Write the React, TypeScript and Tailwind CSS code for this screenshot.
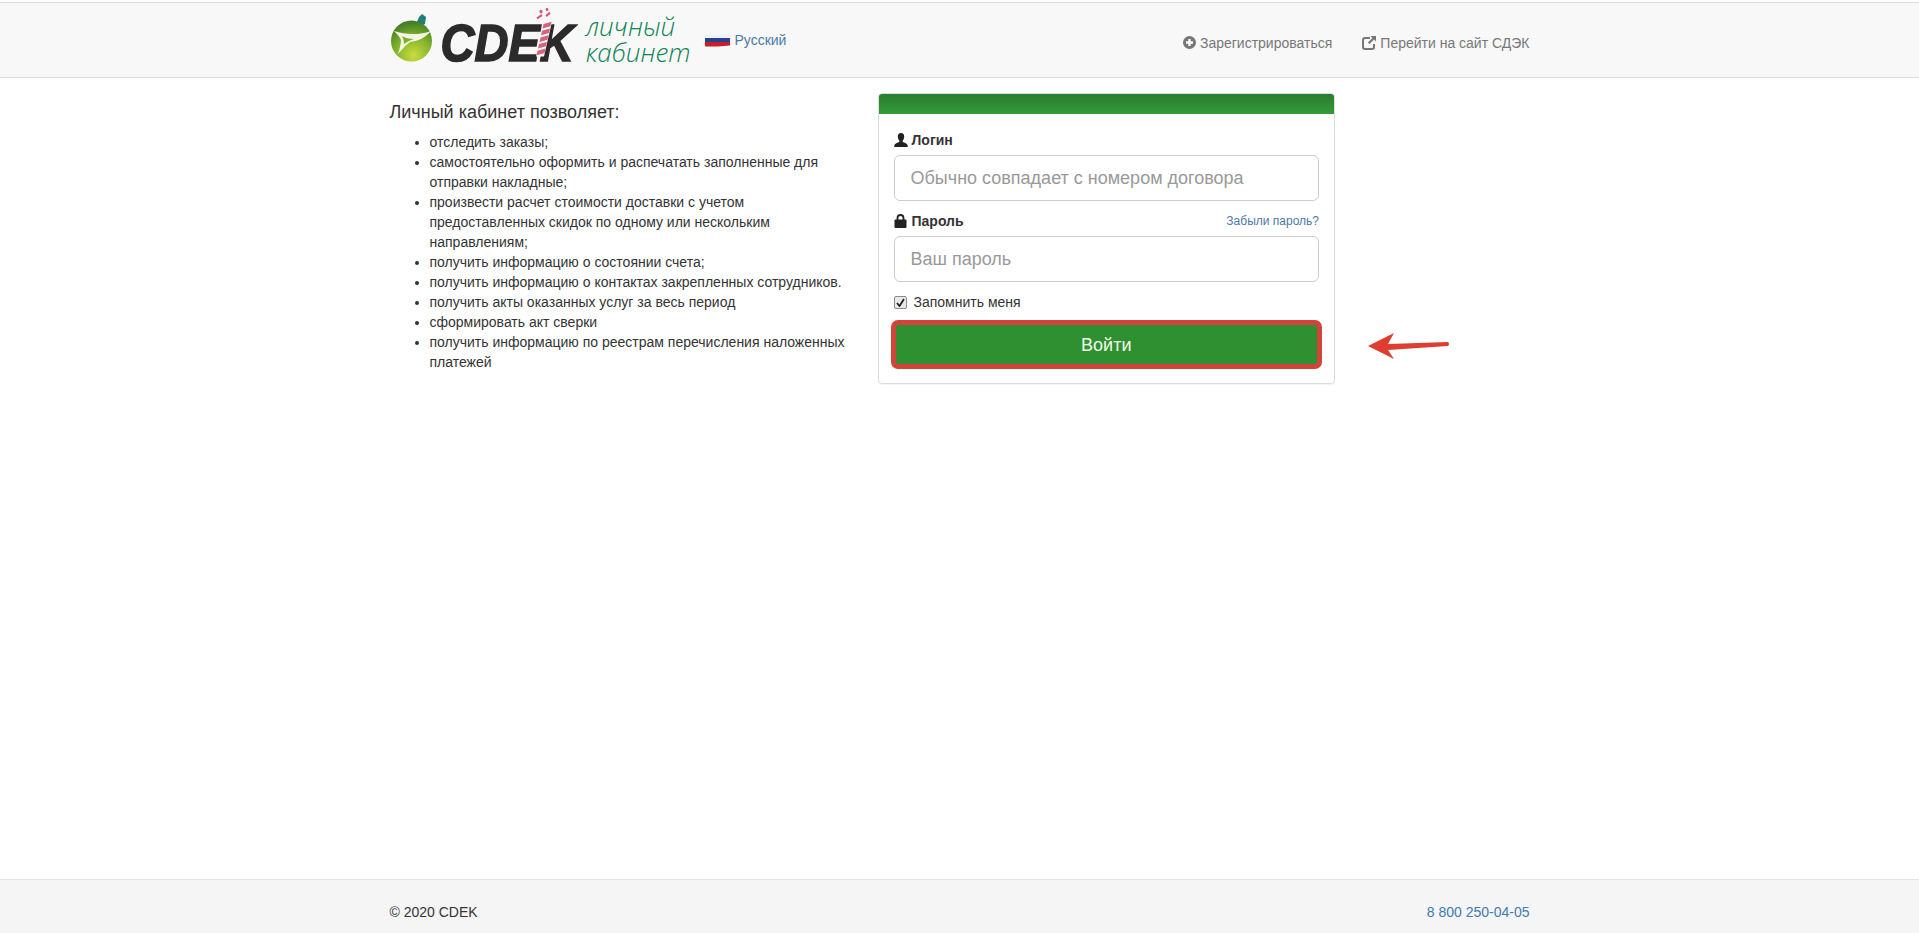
import React from 'react';

const features: string[] = [
  'отследить заказы;',
  'самостоятельно оформить и распечатать заполненные для отправки накладные;',
  'произвести расчет стоимости доставки с учетом предоставленных скидок по одному или нескольким направлениям;',
  'получить информацию о состоянии счета;',
  'получить информацию о контактах закрепленных сотрудников.',
  'получить акты оказанных услуг за весь период',
  'сформировать акт сверки',
  'получить информацию по реестрам перечисления наложенных платежей',
];

function Ornament() {
  return (
    <svg width="44" height="50" viewBox="0 0 44 50" className="mb-[6px] shrink-0">
      <defs>
        <radialGradient id="ball" cx="0.55" cy="0.85" r="0.85">
          <stop offset="0" stopColor="#c9dd3e" />
          <stop offset="0.5" stopColor="#86b62e" />
          <stop offset="1" stopColor="#3d7a22" />
        </radialGradient>
      </defs>
      <path d="M27 10 L29 5 L32 2 L36 5 L35 12 L31 14 Z" fill="#1f7f7a" />
      <circle cx="21.500" cy="29" r="20.500" fill="url(#ball)" />
      <path d="M4 19 C14 22 28 24 41 19 C34 27 27 29 20 30 C17 32 13 36 8 42 C10 36 11 31 11 28 C10 25 7 22 4 19 Z" fill="#f3f6e2" />
      <path d="M12 24 C15 26 19 27 24 27 C20 28 17 30 14 32 C14 29 13 26 12 24 Z" fill="#7fae2c" />
    </svg>
  );
}

function CandyCane() {
  return (
    <svg width="22" height="46" viewBox="0 0 22 46" className="absolute left-[93px] top-[-7px]">
      <circle cx="7" cy="4" r="1.600" fill="#d65a78" />
      <circle cx="13" cy="2" r="1.400" fill="#d65a78" />
      <path d="M3 10 L8 7 M12 8 L16 5" stroke="#d65a78" strokeWidth="2" />
      <path d="M10 13 H18 L10 44 H2 Z" fill="#f6f6f6" />
      <path d="M9.500 15 L17.500 13 L16.500 17 L8.500 19 Z M8 21 L16 19 L15 23 L7 25 Z M6.500 27 L14.500 25 L13.500 29 L5.500 31 Z M5 33 L13 31 L12 35 L4 37 Z M3.500 39 L11.500 37 L10.500 41 L2.500 43 Z" fill="#d9607f" />
    </svg>
  );
}

function Flag() {
  return (
    <svg width="25" height="14" viewBox="0 0 25 14" className="shrink-0">
      <path d="M0 2 C8 2 17 2 25 0 V4.500 C17 5 8 5 0 5 Z" fill="#f2f2f2" />
      <path d="M0 5 H25 V9 H0 Z" fill="#27408f" />
      <path d="M0 9 H25 V12.500 C17 13.500 8 13.500 0 13.500 Z" fill="#c5202a" />
    </svg>
  );
}

function PlusSignIcon() {
  return (
    <svg width="13" height="13" viewBox="0 0 13 13" className="shrink-0">
      <path fillRule="evenodd" fill="#777" d="M6.500 0a6.500 6.500 0 1 0 0 13a6.500 6.500 0 0 0 0-13Zm-1.200 3h2.400v2.300H10v2.400H7.700V10H5.300V7.700H3V5.300h2.300Z" />
    </svg>
  );
}

function ShareIcon() {
  return (
    <svg width="14" height="14" viewBox="0 0 14 14" className="shrink-0">
      <path d="M8 2H3a2 2 0 0 0-2 2v7a2 2 0 0 0 2 2h7a2 2 0 0 0 2-2V8" fill="none" stroke="#777" strokeWidth="2" />
      <path d="M8.500 0H14V5.500L12 3.600L7.500 8.100L5.900 6.500L10.400 2Z" fill="#777" />
    </svg>
  );
}

function UserIcon() {
  return (
    <svg width="14" height="14" viewBox="0 0 14 14" className="shrink-0">
      <path d="M7 0C4.900 0 3.800 1.500 3.800 3.500C3.800 5.300 4.500 6.700 5.300 7.600V8.900C3.500 9.700 0.600 10.500 0.300 12.200V14H13.700V12.200C13.400 10.500 10.500 9.700 8.700 8.900V7.600C9.500 6.700 10.200 5.300 10.200 3.500C10.200 1.500 9.100 0 7 0Z" fill="#222" />
    </svg>
  );
}

function LockIcon() {
  return (
    <svg width="13" height="14" viewBox="0 0 13 14" className="shrink-0">
      <path d="M3.500 6V4a3 3 0 0 1 6 0V6" fill="none" stroke="#222" strokeWidth="1.800" />
      <rect x="0.500" y="5.500" width="12" height="8.500" rx="1" fill="#222" />
    </svg>
  );
}

function Arrow() {
  return (
    <svg width="82" height="30" viewBox="0 0 82 30" className="absolute left-[490px] top-[238px]">
      <path d="M0 15 L26 2 L20 13 L80 11 Q82 13 80 15 L20 19 L26 28 Z" fill="#e03d31" />
    </svg>
  );
}

export default function App() {
  return (
    <div className="flex min-h-screen flex-col bg-white font-['Liberation_Sans',Arial,sans-serif] text-[14px] leading-[20px] text-[#333]">
      <header className="mt-[2px] border-y border-[#dedede] bg-[#f8f8f8]">
        <div className="mx-auto flex h-[74px] w-[1140px] items-center">
          <div className="flex items-center">
            <Ornament />
            <div className="relative ml-[7px] mt-[5px] origin-center scale-y-[1.12] text-[47px] font-bold italic leading-[50px] text-[#2b2b2b] [-webkit-text-stroke:1.5px_#2b2b2b]">
              CDEK
              <CandyCane />
            </div>
            <div className="mb-[3px] ml-[12px] font-['Open_Sans',sans-serif] text-[26px] font-light italic leading-[26px] text-[#0f8255]">
              <div>личный</div>
              <div>кабинет</div>
            </div>
          </div>
          <a className="ml-[15px] flex items-center gap-[4px] text-[14px] text-[#4a7ba6]">
            <Flag />
            Русский
          </a>
          <nav className="ml-auto mt-[5px] flex items-center gap-[30px] text-[#777]">
            <a className="flex items-center gap-[4px]">
              <PlusSignIcon />
              Зарегистрироваться
            </a>
            <a className="flex items-center gap-[4px]">
              <ShareIcon />
              Перейти на сайт СДЭК
            </a>
          </nav>
        </div>
      </header>

      <main className="flex-1">
        <div className="mx-auto flex w-[1140px] gap-[30px] pt-[15px]">
          <section className="w-[458px] shrink-0">
            <h4 className="mt-[9px] text-[18px] leading-[20px]">Личный кабинет позволяет:</h4>
            <ul className="mt-[10px] list-disc pl-[40px]">
              {features.map((item) => (
                <li key={item}>{item}</li>
              ))}
            </ul>
          </section>

          <section className="relative w-[457.5px]">
            <div className="rounded-[4px] border border-[#ddd] bg-white shadow-[0_1px_1px_rgba(0,0,0,0.05)]">
              <div className="h-[20px] rounded-t-[3px] bg-gradient-to-b from-[#2a7d2e] to-[#369a39]" />
              <form className="px-[15px] pb-[14px] pt-[16px]">
                <label className="mb-[5px] flex items-center gap-[4px] font-bold">
                  <UserIcon />
                  Логин
                </label>
                <input
                  type="text"
                  placeholder="Обычно совпадает с номером договора"
                  className="mb-[10px] block h-[46px] w-full rounded-[6px] border border-[#ccc] px-[16px] text-[18px] outline-none placeholder:text-[#999]"
                />
                <div className="mb-[5px] flex items-center justify-between">
                  <label className="flex items-center gap-[5px] font-bold">
                    <LockIcon />
                    Пароль
                  </label>
                  <a className="text-[12px] text-[#4a7ba6]">Забыли пароль?</a>
                </div>
                <input
                  type="password"
                  placeholder="Ваш пароль"
                  className="block h-[46px] w-full rounded-[6px] border border-[#ccc] px-[16px] text-[18px] outline-none placeholder:text-[#999]"
                />
                <label className="mb-[8px] mt-[10px] flex items-center gap-[7px]">
                  <span className="flex h-[13px] w-[13px] items-center justify-center rounded-[2px] border border-[#8a8a8a] bg-[#e9e9e9]">
                    <svg width="9" height="9" viewBox="0 0 9 9">
                      <path d="M1 5 L3.500 8 L8 1" fill="none" stroke="#222" strokeWidth="1.800" />
                    </svg>
                  </span>
                  Запомнить меня
                </label>
                <button
                  type="button"
                  className="-mx-[3px] block h-[49px] w-[calc(100%+6px)] rounded-[7px] border-[5px] border-[#d2433a] bg-[#2f9032] text-[18px] text-[#f2fbe9]"
                >
                  Войти
                </button>
              </form>
            </div>
            <Arrow />
          </section>
        </div>
      </main>

      <footer className="border-t border-[#e3e3e3] bg-[#f5f5f5]">
        <div className="mx-auto flex h-[53px] w-[1140px] items-center justify-between pt-[10px]">
          <span>© 2020 CDEK</span>
          <a className="text-[#3f7bad]">8 800 250-04-05</a>
        </div>
      </footer>
    </div>
  );
}
